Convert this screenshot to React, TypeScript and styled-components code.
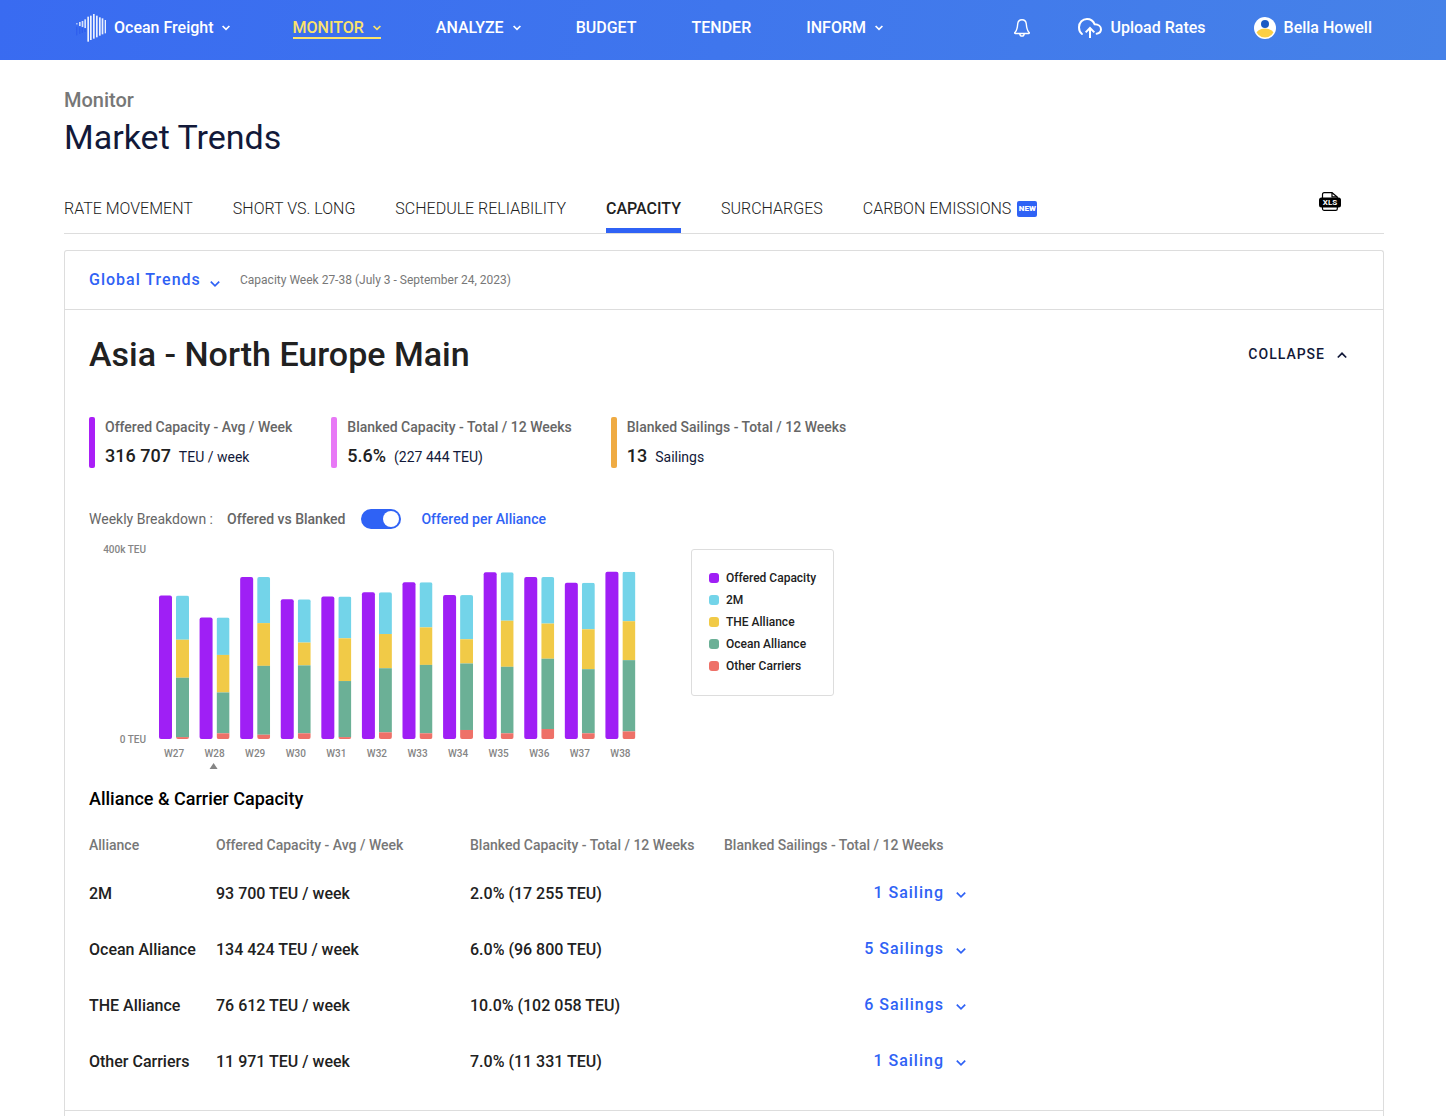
import React, { useState } from "react";
import styled, { createGlobalStyle } from "styled-components";

const color = {
  blue: "#2f62f5",
  navy: "#121939",
  ink: "#212121",
  grey: "#666666",
  mute: "#777777",
  line: "#dddddd",
  yellow: "#fbe36a",
};

const GlobalStyle = createGlobalStyle`
  *, *::before, *::after { box-sizing: border-box; }
  body {
    margin: 0;
    background: #fff;
    color: ${color.ink};
    font-family: Roboto, "Liberation Sans", sans-serif;
    font-size: 14px;
    -webkit-font-smoothing: antialiased;
  }
  h1, h2, h3, p, dl, dd { margin: 0; }
  button, select {
    font: inherit;
    color: inherit;
    background: none;
    border: 0;
    padding: 0;
    margin: 0;
    cursor: pointer;
  }
  a { color: inherit; text-decoration: none; }
`;

/* ---------- top bar ---------- */

const TopBar = styled.header`
  display: flex;
  align-items: center;
  height: 60px;
  padding: 0 74px 4px 76px;
  background: linear-gradient(100deg, #396bf1 0%, #3f76ed 50%, #4682e8 100%);
  color: #fff;
  font-size: 16px;
  font-weight: 500;
  line-height: 18px;
`;

const Brand = styled.button`
  display: flex;
  align-items: center;
  gap: 8px;
`;

const MainNav = styled.nav`
  display: flex;
  align-items: center;
  gap: 55px;
  margin-left: 63px;
`;

const NavItem = styled.a<{ $active?: boolean }>`
  display: flex;
  align-items: center;
  gap: 9px;
  border-top: 2px solid transparent;
  border-bottom: 2px solid ${(p) => (p.$active ? color.yellow : "transparent")};
  color: ${(p) => (p.$active ? color.yellow : "inherit")};
`;

const UserArea = styled.div`
  display: flex;
  align-items: center;
  gap: 48px;
  margin-left: auto;
`;

const UserLink = styled.a`
  display: flex;
  align-items: center;
  gap: 8px;
`;

const IconButton = styled.button`
  display: flex;
`;

/* ---------- page heading and tabs ---------- */

const Page = styled.main`
  padding: 28px 62px 0 64px;
`;

const Crumb = styled.p`
  color: ${color.mute};
  font-size: 20px;
  font-weight: 500;
  line-height: 24px;
`;

const PageTitle = styled.h1`
  color: ${color.navy};
  font-size: 34px;
  font-weight: 400;
  line-height: 50px;
`;

const TabBar = styled.div`
  display: flex;
  align-items: flex-start;
  justify-content: space-between;
  margin-top: 30px;
  padding-right: 43px;
  border-bottom: 1px solid ${color.line};
`;

const Tabs = styled.nav`
  display: flex;
  gap: 40px;
`;

const Tab = styled.a<{ $active?: boolean }>`
  display: flex;
  align-items: center;
  gap: 6px;
  padding: 7px 0 9px;
  border-bottom: 5px solid ${(p) => (p.$active ? color.blue : "transparent")};
  font-size: 16px;
  font-weight: ${(p) => (p.$active ? 500 : 300)};
  line-height: 20px;
`;

const NewBadge = styled.span`
  width: 20px;
  border-radius: 2px;
  background: ${color.blue};
  color: #fff;
  font-size: 8px;
  font-weight: 900;
  line-height: 16px;
  text-align: center;
`;

/* ---------- panel ---------- */

const Panel = styled.section`
  margin-top: 16px;
  border: 1px solid ${color.line};
  border-bottom: 0;
  border-radius: 3px 3px 0 0;
`;

const PanelHead = styled.div`
  display: flex;
  align-items: center;
  gap: 20px;
  height: 59px;
  padding: 0 24px;
  border-bottom: 1px solid ${color.line};
`;

const ScopePicker = styled.div`
  display: flex;
  align-items: center;
  position: relative;
  color: ${color.blue};

  svg {
    position: absolute;
    right: 0;
    top: 5px;
    pointer-events: none;
  }
`;

const ScopeSelect = styled.select`
  appearance: none;
  padding-right: 18px;
  font-size: 16px;
  font-weight: 500;
  line-height: 20px;
  letter-spacing: 1px;
`;

const Period = styled.span`
  color: ${color.mute};
  font-size: 12px;
  line-height: 20px;
`;

const Route = styled.article`
  padding: 23px 24px 21px;
  border-bottom: 1px solid ${color.line};
`;

const RouteHead = styled.div`
  display: flex;
  align-items: center;
  justify-content: space-between;
  padding-right: 12px;
`;

const RouteTitle = styled.h2`
  font-size: 34px;
  font-weight: 500;
  line-height: 42px;
`;

const CollapseButton = styled.button`
  display: flex;
  align-items: center;
  gap: 12px;
  color: ${color.navy};
  font-weight: 500;
  line-height: 20px;
  letter-spacing: 1px;
`;

const NextRoute = styled.div`
  height: 5px;
`;

/* ---------- key figures ---------- */

const Stats = styled.dl`
  display: flex;
  flex-wrap: wrap;
  gap: 39px;
  margin-top: 42px;
`;

const Stat = styled.div<{ $tone: string }>`
  position: relative;
  height: 51px;
  padding-left: 16px;

  &::before {
    content: "";
    position: absolute;
    inset: 0 auto 0 0;
    width: 6px;
    border-radius: 2px;
    background: ${(p) => p.$tone};
  }
`;

const StatLabel = styled.dt`
  color: ${color.grey};
  font-weight: 500;
  line-height: 20px;
`;

const StatValue = styled.dd`
  display: flex;
  align-items: baseline;
  gap: 8px;
  margin-top: 7px;
  color: ${color.navy};
  line-height: 24px;

  strong {
    color: ${color.ink};
    font-size: 18px;
    font-weight: 500;
  }
`;

/* ---------- breakdown switch ---------- */

const Breakdown = styled.div`
  display: flex;
  align-items: center;
  gap: 14px;
  margin-top: 41px;
  color: ${color.grey};
  line-height: 20px;
`;

const BreakdownOption = styled.label<{ $active?: boolean }>`
  color: ${(p) => (p.$active ? color.blue : "inherit")};
  font-weight: 500;
`;

const Switch = styled.input`
  appearance: none;
  width: 40px;
  height: 20px;
  margin: 0 6px 0 2px;
  padding: 2px;
  border-radius: 10px;
  background: ${color.blue};
  cursor: pointer;

  &::before {
    content: "";
    display: block;
    width: 16px;
    height: 16px;
    border-radius: 50%;
    background: #fff;
  }
  &:checked::before { margin-left: 20px; }
`;

/* ---------- chart ---------- */

const ChartRow = styled.div`
  display: flex;
  align-items: flex-start;
  gap: 42px;
  margin-top: 12px;
`;

const ChartSvg = styled.svg`
  display: block;
  flex: none;

  text {
    fill: #858585;
    font-size: 10px;
    font-weight: 500;
  }
`;

const Legend = styled.ul`
  list-style: none;
  margin: 8px 0 0;
  padding: 17px 17px 18px;
  border: 1px solid ${color.line};
  border-radius: 3px;
`;

const LegendItem = styled.li<{ $tone: string }>`
  display: flex;
  align-items: center;
  gap: 7px;
  font-size: 12px;
  font-weight: 500;
  line-height: 22px;

  &::before {
    content: "";
    width: 10px;
    height: 10px;
    border-radius: 3px;
    background: ${(p) => p.$tone};
  }
`;

/* ---------- table ---------- */

const TableTitle = styled.h3`
  margin: 13px 0 14px;
  color: #000;
  font-size: 18px;
  font-weight: 500;
  line-height: 24px;
`;

const Table = styled.table`
  width: 877px;
  max-width: 100%;
  border-collapse: collapse;
  table-layout: fixed;
`;

const HeadCell = styled.th<{ $width?: number }>`
  width: ${(p) => (p.$width ? `${p.$width}px` : "auto")};
  height: 40px;
  padding: 0;
  color: ${color.mute};
  font-weight: 500;
  text-align: left;
`;

const Cell = styled.td<{ $end?: boolean }>`
  height: 56px;
  padding: 0;
  font-size: 16px;
  font-weight: 500;
  text-align: ${(p) => (p.$end ? "right" : "left")};
  white-space: nowrap;
`;

const SailingsButton = styled.button`
  display: inline-flex;
  align-items: center;
  gap: 12px;
  color: ${color.blue};
  line-height: 20px;
  letter-spacing: 1px;
`;

/* ---------- icons ---------- */

const MenuChevron = () => (
  <svg width="8" height="8" viewBox="0 0 8 8" fill="none" stroke="currentColor" strokeWidth="1.700" aria-hidden="true">
    <path d="M.6 2 4 5.400 7.400 2" />
  </svg>
);

const Chevron = ({ up = false }: { up?: boolean }) => (
  <svg width="10" height="14" viewBox="0 0 10 14" fill="none" stroke="currentColor" strokeWidth="1.700" aria-hidden="true">
    <path d={up ? "M.8 10.500 5 6.300 9.200 10.500" : "M.8 6.600 5 10.800 9.200 6.600"} />
  </svg>
);

const LOGO_BARS = [
  [0, 28, 3], [9, 24, 12], [17, 21, 18], [25, 16, 26], [34, 8, 75], [42, 5, 73],
  [51, 0, 74], [60, 5, 65], [69, 10, 55], [77, 13, 48], [86, 18, 40],
];
const LOGO_SHADE = [[0, 38, 26], [9, 40, 20], [17, 42, 15], [25, 45, 9]];

const Logo = () => (
  <svg width="30" height="28" viewBox="0 0 90 84" aria-hidden="true">
    {LOGO_SHADE.map(([x, y, h]) => (
      <rect key={x} x={x} y={y} width="4" height={h} fill="#2f5fee" />
    ))}
    {LOGO_BARS.map(([x, y, h]) => (
      <rect key={x} x={x} y={y} width="5" height={h} fill="#fff" opacity={x > 30 ? 0.9 : 0.8} />
    ))}
  </svg>
);

const Bell = () => (
  <svg width="16" height="18" viewBox="0 0 16 18" fill="none" stroke="#fff" strokeWidth="1.400" strokeLinejoin="round" aria-hidden="true">
    <path d="M8 .8C5.300 .8 3.900 2.600 3.700 5 3.400 9 3.200 11.300.9 13.400c-.4.5-.2 1.100.5 1.100h13.200c.7 0 .9-.6.500-1.100C12.800 11.300 12.600 9 12.300 5 12.100 2.600 10.700.8 8 .8Z" />
    <path d="M5.800 14.800c.2 1.500 1 2.300 2.200 2.300s2-.8 2.200-2.300" />
  </svg>
);

const CloudArrow = () => (
  <svg width="24" height="20" viewBox="0 0 72 60" fill="none" stroke="#fff" strokeWidth="6" aria-hidden="true">
    <path d="M12 48C5 43 3 36 3 28 3 13 14 3 27 3c11 0 19 6 23 16 11 0 19 6 19 15 0 7-5 12-13 13" strokeLinecap="round" />
    <path d="M36 60V31M23 43l13-13 13 13" />
  </svg>
);

const Avatar = () => (
  <svg width="22" height="22" viewBox="0 0 22 22" aria-hidden="true">
    <clipPath id="avatar-face">
      <circle cx="11" cy="11" r="9.500" />
    </clipPath>
    <circle cx="11" cy="11" r="11" fill="#fff" />
    <circle cx="11" cy="7" r="4" fill="#1c5bc4" />
    <ellipse cx="11" cy="18" rx="9.500" ry="6.500" fill="#fbcf45" clipPath="url(#avatar-face)" />
  </svg>
);

const XlsFile = () => (
  <svg width="22" height="20" viewBox="0 0 22 20" aria-hidden="true">
    <path d="M3.500 7V2.500c0-1 .6-1.800 1.700-1.800H13L18.300 5v12c0 .8-.6 1.300-1.500 1.300H5.200c-1 0-1.700-.6-1.700-1.500v-3" fill="#fff" stroke="#000" strokeWidth="1.200" />
    <path d="M13 .8V4.800h5" fill="none" stroke="#000" strokeWidth="1.200" />
    <rect y="5.500" width="22" height="10" rx="2.500" fill="#000" />
    <text x="11" y="13.400" fill="#fff" fontSize="8" fontWeight="700" textAnchor="middle">XLS</text>
  </svg>
);

/* ---------- data ---------- */

const NAV = [
  { label: "MONITOR", menu: true, active: true },
  { label: "ANALYZE", menu: true },
  { label: "BUDGET" },
  { label: "TENDER" },
  { label: "INFORM", menu: true },
];

const TABS = [
  { label: "RATE MOVEMENT" },
  { label: "SHORT VS. LONG" },
  { label: "SCHEDULE RELIABILITY" },
  { label: "CAPACITY", active: true },
  { label: "SURCHARGES" },
  { label: "CARBON EMISSIONS", isNew: true },
];

const STATS = [
  { tone: "#aa1ff7", label: "Offered Capacity - Avg / Week", value: "316 707", unit: "TEU / week" },
  { tone: "#e879f6", label: "Blanked Capacity - Total / 12 Weeks", value: "5.6%", unit: "(227 444 TEU)" },
  { tone: "#efab43", label: "Blanked Sailings - Total / 12 Weeks", value: "13", unit: "Sailings" },
];

const SERIES = [
  { label: "2M", tone: "#73d4e9" },
  { label: "THE Alliance", tone: "#f1ca47" },
  { label: "Ocean Alliance", tone: "#6bb096" },
  { label: "Other Carriers", tone: "#ee7168" },
];
const OFFERED = { label: "Offered Capacity", tone: "#9f1ff5" };

// Thousands of TEU per week, in the order of SERIES.
const WEEKS: [string, number[]][] = [
  ["W27", [93, 80, 125, 4]],
  ["W28", [79, 79, 86, 12]],
  ["W29", [97, 90, 145, 9]],
  ["W30", [91, 48, 143, 12]],
  ["W31", [88, 90, 118, 4]],
  ["W32", [88, 72, 135, 14]],
  ["W33", [95, 79, 144, 12]],
  ["W34", [93, 51, 140, 19]],
  ["W35", [102, 97, 140, 12]],
  ["W36", [98, 74, 148, 21]],
  ["W37", [98, 84, 135, 12]],
  ["W38", [104, 82, 150, 16]],
];
const CURRENT_WEEK = "W28";

const ALLIANCES = [
  { name: "2M", offered: "93 700 TEU / week", blanked: "2.0% (17 255 TEU)", sailings: "1 Sailing" },
  { name: "Ocean Alliance", offered: "134 424 TEU / week", blanked: "6.0% (96 800 TEU)", sailings: "5 Sailings" },
  { name: "THE Alliance", offered: "76 612 TEU / week", blanked: "10.0% (102 058 TEU)", sailings: "6 Sailings" },
  { name: "Other Carriers", offered: "11 971 TEU / week", blanked: "7.0% (11 331 TEU)", sailings: "1 Sailing" },
];

/* ---------- chart drawing ---------- */

const PLOT = { left: 70, right: 557, base: 198, height: 190, max: 400, bar: 13, gap: 4 };

function CapacityChart() {
  const step = (PLOT.right - PLOT.left) / WEEKS.length;
  const scale = PLOT.height / PLOT.max;
  return (
    <ChartSvg width="560" height="233" viewBox="0 0 560 233" role="img" aria-label="Weekly offered capacity per alliance">
      <text x="57" y="12" textAnchor="end">400k TEU</text>
      <text x="57" y="202" textAnchor="end">0 TEU</text>
      {WEEKS.map(([week, parts], i) => {
        const x = PLOT.left + i * step;
        const x2 = x + PLOT.bar + PLOT.gap;
        const total = parts.reduce((a, b) => a + b, 0) * scale;
        let y = PLOT.base - total;
        return (
          <g key={week}>
            <rect x={x} y={y} width={PLOT.bar} height={total} rx="2" fill={OFFERED.tone} />
            <clipPath id={`stack-${week}`}>
              <rect x={x2} y={y} width={PLOT.bar} height={total} rx="2" />
            </clipPath>
            <g clipPath={`url(#stack-${week})`}>
              {parts.map((part, s) => {
                const top = y;
                y += part * scale;
                return <rect key={s} x={x2} y={top} width={PLOT.bar} height={part * scale} fill={SERIES[s].tone} />;
              })}
            </g>
            <text x={x + 15} y="216" textAnchor="middle">{week}</text>
            {week === CURRENT_WEEK && <path d={`M${x + 10} 228h8l-4-6Z`} fill="#858585" />}
          </g>
        );
      })}
    </ChartSvg>
  );
}

export default function App() {
  const [open, setOpen] = useState(true);
  const [perAlliance, setPerAlliance] = useState(true);

  return (
    <>
      <GlobalStyle />
      <TopBar>
        <Brand type="button" aria-haspopup="menu">
          <Logo />
          Ocean Freight
          <MenuChevron />
        </Brand>
        <MainNav aria-label="Main">
          {NAV.map((item) => (
            <NavItem key={item.label} href="#" $active={item.active}>
              {item.label}
              {item.menu && <MenuChevron />}
            </NavItem>
          ))}
        </MainNav>
        <UserArea>
          <IconButton type="button" aria-label="Notifications"><Bell /></IconButton>
          <UserLink href="#"><CloudArrow />Upload Rates</UserLink>
          <UserLink href="#"><Avatar />Bella Howell</UserLink>
        </UserArea>
      </TopBar>

      <Page>
        <Crumb>Monitor</Crumb>
        <PageTitle>Market Trends</PageTitle>

        <TabBar>
          <Tabs aria-label="Market trends">
            {TABS.map((tab) => (
              <Tab key={tab.label} href="#" $active={tab.active}>
                {tab.label}
                {tab.isNew && <NewBadge>NEW</NewBadge>}
              </Tab>
            ))}
          </Tabs>
          <IconButton type="button" aria-label="Export to Excel"><XlsFile /></IconButton>
        </TabBar>

        <Panel>
          <PanelHead>
            <ScopePicker>
              <ScopeSelect aria-label="Scope" defaultValue="global">
                <option value="global">Global Trends</option>
              </ScopeSelect>
              <Chevron />
            </ScopePicker>
            <Period>Capacity Week 27-38 (July 3 - September 24, 2023)</Period>
          </PanelHead>

          <Route>
            <RouteHead>
              <RouteTitle>Asia - North Europe Main</RouteTitle>
              <CollapseButton type="button" aria-expanded={open} onClick={() => setOpen(!open)}>
                {open ? "COLLAPSE" : "EXPAND"}
                <Chevron up={open} />
              </CollapseButton>
            </RouteHead>

            {open && (
              <>
                <Stats>
                  {STATS.map((s) => (
                    <Stat key={s.label} $tone={s.tone}>
                      <StatLabel>{s.label}</StatLabel>
                      <StatValue><strong>{s.value}</strong>{s.unit}</StatValue>
                    </Stat>
                  ))}
                </Stats>

                <Breakdown>
                  <span>Weekly Breakdown :</span>
                  <BreakdownOption htmlFor="breakdown" $active={!perAlliance}>Offered vs Blanked</BreakdownOption>
                  <Switch
                    id="breakdown"
                    type="checkbox"
                    role="switch"
                    checked={perAlliance}
                    onChange={(e) => setPerAlliance(e.target.checked)}
                  />
                  <BreakdownOption htmlFor="breakdown" $active={perAlliance}>Offered per Alliance</BreakdownOption>
                </Breakdown>

                <ChartRow>
                  <CapacityChart />
                  <Legend>
                    {[OFFERED, ...SERIES].map((s) => (
                      <LegendItem key={s.label} $tone={s.tone}>{s.label}</LegendItem>
                    ))}
                  </Legend>
                </ChartRow>

                <TableTitle>Alliance &amp; Carrier Capacity</TableTitle>
                <Table>
                  <thead>
                    <tr>
                      <HeadCell $width={127}>Alliance</HeadCell>
                      <HeadCell $width={254}>Offered Capacity - Avg / Week</HeadCell>
                      <HeadCell $width={254}>Blanked Capacity - Total / 12 Weeks</HeadCell>
                      <HeadCell>Blanked Sailings - Total / 12 Weeks</HeadCell>
                    </tr>
                  </thead>
                  <tbody>
                    {ALLIANCES.map((a) => (
                      <tr key={a.name}>
                        <Cell>{a.name}</Cell>
                        <Cell>{a.offered}</Cell>
                        <Cell>{a.blanked}</Cell>
                        <Cell $end>
                          <SailingsButton type="button">
                            {a.sailings}
                            <Chevron />
                          </SailingsButton>
                        </Cell>
                      </tr>
                    ))}
                  </tbody>
                </Table>
              </>
            )}
          </Route>
          <NextRoute />
        </Panel>
      </Page>
    </>
  );
}
